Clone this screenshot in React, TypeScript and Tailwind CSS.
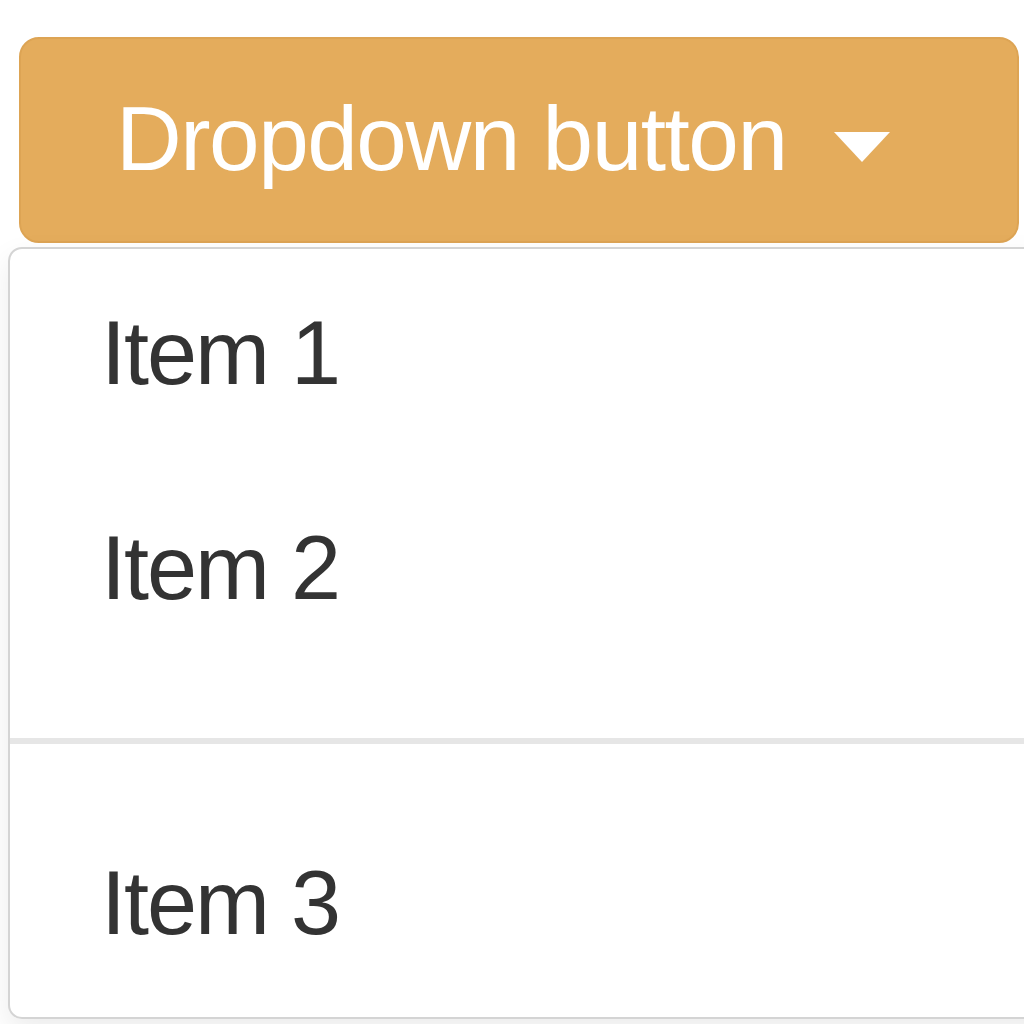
export default function App() {
    const items = ["Item 1", "Item 2"];

    return (
        <div className="w-[1024px] h-[1024px] overflow-hidden bg-white font-['Liberation_Sans',Arial,sans-serif]">
            {/* Button */}
            <div className="ml-[19px] mt-[37px] w-[1000px] h-[206px] box-border rounded-[20px] border-2 border-[#dda454] bg-[#e4ac5c] flex items-start pl-[95px] pt-[50px] text-white">
                <span className="text-[91px] leading-[100px] tracking-[-1.5px] whitespace-nowrap">Dropdown button</span>
                <svg className="ml-[47px] mt-[43px] shrink-0" width="56" height="30" viewBox="0 0 56 30">
                    <path d="M0 0 H56 L28 30 Z" fill="#ffffff" />
                </svg>
            </div>

            {/* Menu */}
            <div className="ml-[8px] mt-[4px] w-[1060px] h-[772px] box-border rounded-[14px] border-2 border-[#d4d4d4] bg-white shadow-[0_12px_30px_rgba(0,0,0,0.08)] text-[#333333]">
                {items.map((label) => (
                    <div key={label} className="pl-[91px] pt-[54px] pb-[61px] text-[90px] leading-[100px] tracking-[-2px]">
                        {label}
                    </div>
                ))}
                <div className="mt-[59px] mb-[55px] h-[6px] bg-[#e6e6e6]"></div>
                <div className="pl-[91px] pt-[54px] pb-[61px] text-[90px] leading-[100px] tracking-[-2px]">Item 3</div>
            </div>
        </div>
    );
}
